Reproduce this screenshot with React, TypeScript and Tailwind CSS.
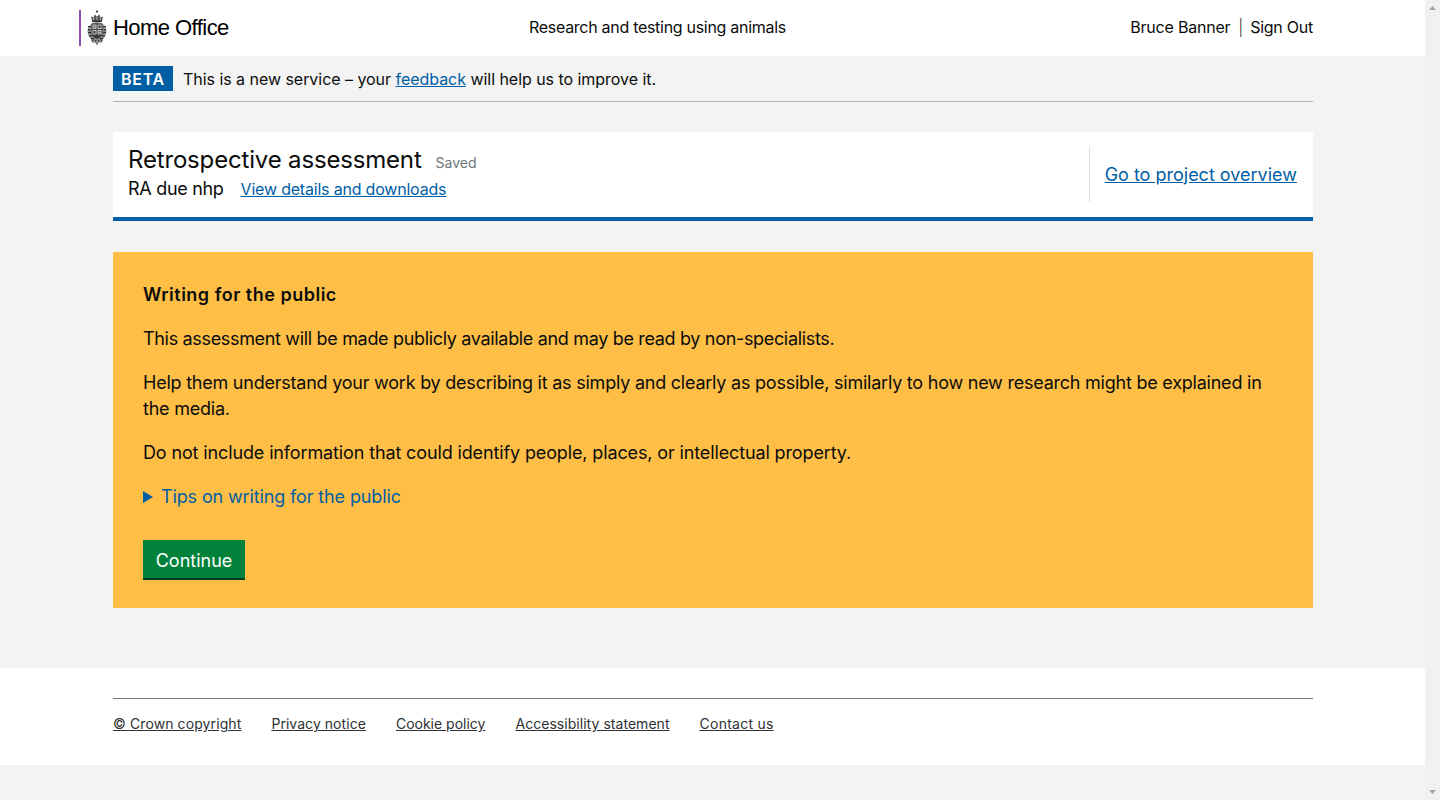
const Crest = () => (
  <svg width="20" height="36" viewBox="0 0 20 36" className="shrink-0">
    {/* crown */}
    <path d="M10 0l1.200 1.600L10 3.200 8.800 1.600z" fill="#444" />
    <path d="M5 11 4 6.500l2.500 1L7.500 4.500 10 6.500l2.500-2 1 3 2.500-1-1 4.500z" fill="#555" />
    <path d="M6.500 7.500v3M10 6.500v4M13.500 7.500v3" stroke="#eee" strokeWidth="0.6" />
    <rect x="5" y="10.500" width="10" height="1.500" fill="#333" />
    {/* garter and supporters */}
    <ellipse cx="10" cy="21.500" rx="9.500" ry="9.500" fill="#8a8a8a" />
    <path d="M1 16h3v1.500H1zM16 16h3v1.500h-3zM1 19h2.500v1.500H1zM16.500 19H19v1.500h-2.500zM1 22h3v1.500H1zM16 22h3v1.500h-3zM2 25h3v1.500H2zM15 25h3v1.500h-3zM4 28h3v1.500H4zM13 28h3v1.500h-3z" fill="#333" />
    <path d="M2 14.500h2v1H2zM16 14.500h2v1h-2zM1.500 17.800h2v.8h-2zM16.500 17.800h2v.8h-2zM1.500 23.800h2v.8h-2zM16.500 23.800h2v.8h-2z" fill="#ddd" />
    {/* shield */}
    <path d="M4.500 13.500h11v9c0 3.500-2.500 5.500-5.500 6.500-3-1-5.500-3-5.500-6.500z" fill="#3a3a3a" />
    <path d="M5.500 14.500h4v4.500h-4zM10.500 14.500h4v4.500h-4zM5.500 20h4v4.500h-4zM10.500 20h4v4.500h-4z" fill="#c9c9c9" />
    <path d="M6.500 15.500h2v.8h-2zM6.500 17.200h2v.8h-2zM11.500 21h2v.8h-2zM11.500 22.700h2v.8h-2zM11.500 15.500h2v2.500h-2zM6.500 21h2v2.500h-2z" fill="#333" />
    {/* motto */}
    <path d="M4 30h12l-1.500 2.500h-9z" fill="#555" />
    <path d="M6 30.700h2v.8H6zM9 30.700h2v.8H9zM12 30.700h2v.8h-2z" fill="#ddd" />
    <path d="M8.500 32.500h3L10 35.500z" fill="#666" />
  </svg>
);

const Triangle = ({ down }: { down?: boolean }) => (
  <svg width="7" height="4" viewBox="0 0 7 4" className={down ? "rotate-180" : ""}>
    <path d="M3.500 0 7 4H0z" fill="#a3a3a3" />
  </svg>
);

const footerLinks = [
  { label: "© Crown copyright", className: "tracking-[0.1px]" },
  { label: "Privacy notice", className: "tracking-[0.05px]" },
  { label: "Cookie policy", className: "tracking-[0px]" },
  { label: "Accessibility statement", className: "tracking-[0.04px]" },
  { label: "Contact us", className: "tracking-[0.25px]" },
];

export default function App() {
  return (
    <div className="flex h-[800px] overflow-hidden bg-[#f3f3f3] font-['Inter',sans-serif] text-[#0b0c0c]">
      <div className="min-w-0 flex-1 bg-[#f3f3f3]">
        <header className="flex h-14 items-center bg-white pl-[79px] pr-[112px]">
          <div className="flex w-[400px] items-center">
            <div className="h-9 w-0.5 bg-[#8f4aa8]" />
            <div className="ml-[6px]">
              <Crest />
            </div>
            <span className="ml-[6px] font-['Liberation_Sans',sans-serif] text-[22px] leading-none tracking-[-0.55px] text-black">
              Home Office
            </span>
          </div>
          <div className="ml-[50px] flex-1 -translate-y-px text-base tracking-[-0.29px]">
            Research and testing using animals
          </div>
          <div className="flex -translate-y-px text-base tracking-[-0.2px]">
            <span className="w-[101px]">Bruce Banner</span>
            <span className="ml-[7px] w-[5px] font-light text-[#333333]">|</span>
            <span className="ml-[7px] tracking-[-0.25px]">Sign Out</span>
          </div>
        </header>

        <div className="ml-[113px] w-[1200px]">
          <div className="flex h-[46px] items-center border-b border-[#b1b4b6] py-px">
            <strong className="flex h-[25px] w-[60px] items-center justify-center bg-[#005ea5] text-base font-semibold tracking-[0.7px] text-white">
              BETA
            </strong>
            <p className="ml-[10px] text-base tracking-[-0.04px]">
              This is a new service – your{" "}
              <a href="#" className="text-[#005ea5] underline">
                feedback
              </a>{" "}
              will help us to improve it.
            </p>
          </div>

          <section className="mt-[30px] flex h-[89px] items-center justify-between border-b-4 border-[#005ea5] bg-white pl-[15px] pr-[16px]">
            <div className="-translate-y-px">
              <div className="flex items-baseline">
                <h1 className="text-2xl leading-[30px] tracking-[-0.17px]">
                  Retrospective assessment
                </h1>
                <span className="ml-[14px] text-sm text-[#6f777b]">Saved</span>
              </div>
              <div className="flex items-baseline text-base leading-6">
                <span className="text-lg tracking-[-0.3px]">RA due nhp</span>
                <a href="#" className="ml-[17px] tracking-[-0.2px] text-[#005ea5] underline">
                  View details and downloads
                </a>
              </div>
            </div>
            <div className="flex h-[55px] items-center border-l border-[#dddddd] pl-[15px]">
              <a href="#" className="text-lg text-[#005ea5] underline">
                Go to project overview
              </a>
            </div>
          </section>

          <section className="mt-[31px] h-[356px] bg-[#ffbf47] p-[30px] text-lg leading-[26px]">
            <h2 className="font-semibold tracking-[0.5px]">Writing for the public</h2>
            <p className="mt-[18px] tracking-[-0.33px]">
              This assessment will be made publicly available and may be read by non-specialists.
            </p>
            <p className="mt-[18px] tracking-[-0.23px]">
              Help them understand your work by describing it as simply and clearly as possible,
              similarly to how new research might be explained in the media.
            </p>
            <p className="mt-[18px] tracking-[-0.13px]">
              Do not include information that could identify people, places, or intellectual
              property.
            </p>
            <div className="mt-[18px] flex items-center text-[#005ea5]">
              <svg width="10" height="12" viewBox="0 0 10 12">
                <path d="M0 0l10 6L0 12z" fill="#005ea5" />
              </svg>
              <span className="ml-[8px] tracking-[-0.13px]">Tips on writing for the public</span>
            </div>
            <button className="mt-[30px] flex h-10 w-[102px] items-center justify-center border-b-2 border-[#00401e] bg-[#00823b] pt-[3px] text-lg text-white">
              Continue
            </button>
          </section>
        </div>

        <footer className="mt-[60px] h-[97px] bg-white pt-[30px]">
          <div className="ml-[113px] flex w-[1200px] gap-[30px] border-t border-[#777777] pt-[16px] text-sm leading-[18px] text-[#2e3133]">
            {footerLinks.map((link) => (
              <a key={link.label} href="#" className={`underline ${link.className}`}>
                {link.label}
              </a>
            ))}
          </div>
        </footer>
      </div>

      <div className="flex w-[15px] shrink-0 flex-col items-center justify-between bg-[#f1f1f1] py-[6px]">
        <Triangle />
        <Triangle down />
      </div>
    </div>
  );
}
